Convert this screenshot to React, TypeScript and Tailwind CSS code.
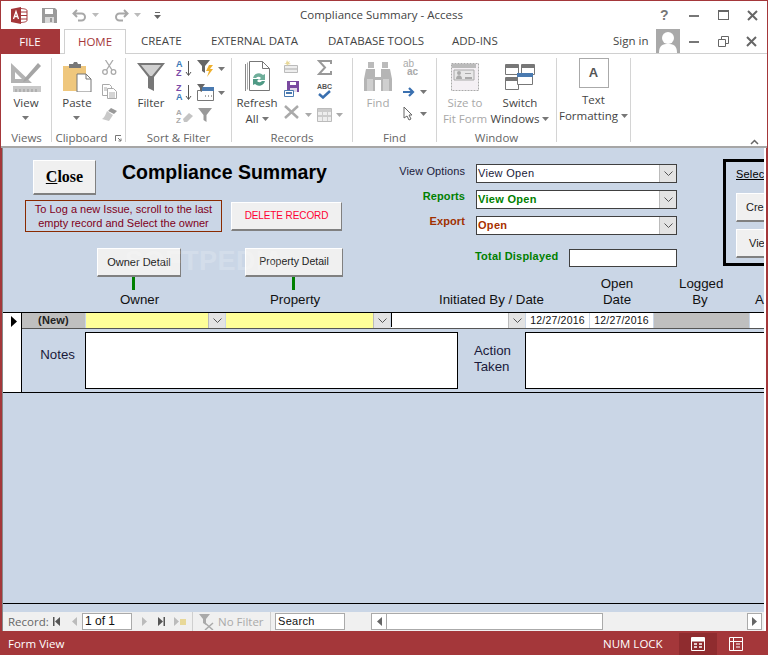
const ui = "font-['Open_Sans','Noto_Sans',sans-serif]";
const form = "font-['Liberation_Sans',Arial,sans-serif]";

const Caret = ({ color = "#777" }: { color?: string }) => (
  <svg width="7" height="4" viewBox="0 0 7 4" className="shrink-0"><path d="M0 0h7L3.5 4z" fill={color} /></svg>
);

const AccessLogo = () => (
  <svg width="17" height="17" viewBox="0 0 17 17">
    <path d="M9 1.5c3 0 7 .6 7 2v10c0 1.400-4 2-7 2z" fill="#fff" stroke="#a4373a" />
    <path d="M10 5h6M10 8.500h6M10 12h6" stroke="#a4373a" />
    <path d="M0 2l10-2v17L0 15z" fill="#a4373a" />
    <path d="M2.500 12L5 4.500 7.500 12M3.500 9.500h3" stroke="#fff" strokeWidth="1.300" fill="none" />
  </svg>
);

const SaveIcon = () => (
  <svg width="15" height="15" viewBox="0 0 15 15">
    <path d="M0 0h13l2 2v13H0z" fill="#9b9b9b" />
    <path d="M3 1h8v5H3z" fill="#fff" />
    <path d="M3 9h9v6H3z" fill="#d8d8d8" />
    <path d="M8 10h2v4H8z" fill="#9b9b9b" />
  </svg>
);

const Undo = ({ flip = false }: { flip?: boolean }) => (
  <svg width="15" height="13" viewBox="0 0 15 13" className={flip ? "-scale-x-100" : ""}>
    <path d="M5 1L1.500 4.500 5 8M2 4.500h7.500a3.500 3.500 0 0 1 0 7H6" fill="none" stroke="#a8a8a8" strokeWidth="2" />
  </svg>
);

const QatCaret = () => (
  <svg width="7" height="7" viewBox="0 0 7 7"><path d="M1 0h5v1H1zM0 3h7L3.500 7z" fill="#666" /></svg>
);

const WinMin = () => <span className="block w-[10px] h-[2px] bg-[#777] mt-[6px]" />;

const WinClose = () => (
  <svg width="11" height="11" viewBox="0 0 11 11"><path d="M1 1l9 9M10 1l-9 9" stroke="#666" strokeWidth="2" /></svg>
);

const ViewIcon = () => (
  <svg width="32" height="32" viewBox="0 0 32 32">
    <path d="M1 2v20h21z M5 11v7h7z" fill="#b3b3b3" fillRule="evenodd" />
    <path d="M15 17L28 2l3 3-13 14-5 2z" fill="#a5a5a5" />
    <path d="M3 25h28v6H3z" fill="#c8c8c8" />
    <path d="M6 28v3M10 28v3M14 28v3M18 28v3M22 28v3M26 28v3" stroke="#999" />
  </svg>
);

const PasteIcon = () => (
  <svg width="30" height="30" viewBox="0 0 30 30">
    <path d="M1 4h23v25H1z" fill="#efc77d" />
    <path d="M7 2h4l1-2h3l1 2h3v4H7z" fill="#777" />
    <path d="M15 12h9l5 5v13H15z" fill="#fff" stroke="#777" />
    <path d="M24 12v5h5" fill="none" stroke="#777" />
  </svg>
);

const CutIcon = () => (
  <svg width="15" height="15" viewBox="0 0 15 15" fill="none" stroke="#aaa" strokeWidth="1.300">
    <circle cx="3" cy="12" r="2.300" /><circle cx="11.500" cy="12" r="2.300" />
    <path d="M4.500 10L11 0M10 10L3.500 0" />
  </svg>
);

const CopyIcon = () => (
  <svg width="15" height="15" viewBox="0 0 15 15" fill="#fff" stroke="#aaa">
    <path d="M.5.500h7l2 2v9h-9z" /><path d="M5.500 4.500h6l3 3v7h-9z" />
    <path d="M7 9h6M7 11h6M7 13h6M2 4h3M2 6h3" />
  </svg>
);

const BrushIcon = () => (
  <svg width="15" height="13" viewBox="0 0 15 13">
    <path d="M9 0l6 3-3 3-6-3z" fill="#999" />
    <path d="M5 3l6 4-4 6-7-2c2-1 3-3 5-8z" fill="#c9c9c9" />
  </svg>
);

const FunnelLarge = () => (
  <svg width="28" height="28" viewBox="0 0 28 28">
    <path d="M0 0h28L17 14v14l-6-3V14z" fill="#777" />
    <path d="M4 2h20l-9 11h-2z" fill="#d0d0d0" />
  </svg>
);

const SortIcon = ({ down = true }: { down?: boolean }) => (
  <div className="relative w-[17px] h-[17px] flex">
    <div className={`flex flex-col text-[9px] leading-[8.500px] font-bold ${form}`}>
      <span className={down ? "text-[#3a7ab8]" : "text-[#7a4aa8]"}>{down ? "A" : "Z"}</span>
      <span className={down ? "text-[#7a4aa8]" : "text-[#3a7ab8]"}>{down ? "Z" : "A"}</span>
    </div>
    <svg width="7" height="17" viewBox="0 0 7 17" className="ml-[2px]"><path d="M3.500 1v14M1 12l2.500 3.500L6 12" fill="none" stroke="#555" /></svg>
  </div>
);

const FunnelSmall = ({ color = "#777" }: { color?: string }) => (
  <svg width="14" height="14" viewBox="0 0 14 14"><path d="M0 0h14L8.500 7v7l-3-2V7z" fill={color} /></svg>
);

const FilterBolt = () => (
  <svg width="17" height="17" viewBox="0 0 17 17">
    <path d="M0 0h13L8 6v7l-3-2V6z" fill="#666" />
    <path d="M12 5h4l-3 4h3l-6 8 2-6H9z" fill="#efb02e" />
  </svg>
);

const FilterForm = () => (
  <svg width="17" height="17" viewBox="0 0 17 17">
    <path d="M.5 6.500h16v10H.5z" fill="#fff" stroke="#777" />
    <path d="M5 3h12v4H5z" fill="#4a7ab0" />
    <path d="M8 12h1M11 12h1M14 12h1" stroke="#555" />
    <path d="M0 0h8L5 4v4L3 7V4z" fill="#666" />
  </svg>
);

const ClearSort = () => (
  <svg width="17" height="16" viewBox="0 0 17 16">
    <text x="0" y="7" fontSize="8" fill="#aaa" fontFamily="Liberation Sans" fontWeight="bold">A</text>
    <text x="0" y="15" fontSize="8" fill="#aaa" fontFamily="Liberation Sans" fontWeight="bold">Z</text>
    <path d="M7 11l6-6 4 3-6 6H8z" fill="#c4c4c4" />
  </svg>
);

const RefreshIcon = () => (
  <svg width="25" height="31" viewBox="0 0 25 31">
    <path d="M.5 3v27" stroke="#888" fill="none" />
    <path d="M2.500 1.500v27" stroke="#aaa" fill="none" />
    <path d="M4.500.5h13l7 7v22h-20z" fill="#fff" stroke="#777" />
    <path d="M17.500.5v7h7" fill="none" stroke="#777" />
    <path d="M8 17a6 6 0 0 1 10-3l2-1v6h-6l2-2a3.500 3.500 0 0 0-5 0z" fill="#6fae9a" />
    <path d="M20 20a6 6 0 0 1-10 3l-2 1v-6h6l-2 2a3.500 3.500 0 0 0 5 0z" fill="#4f9a85" />
  </svg>
);

const NewRecIcon = () => (
  <svg width="14" height="13" viewBox="0 0 14 13">
    <path d="M.5 5.500h13v7H.5z" fill="#eee" stroke="#bbb" />
    <path d="M1 8h12v2H1z" fill="#ccc" />
    <path d="M3 0l1 2 2-1-1 2 2 1-3 .5L3 6 2.500 4 0 3.500 2 3z" fill="#e8d898" />
  </svg>
);

const SaveRecIcon = () => (
  <svg width="15" height="16" viewBox="0 0 15 16">
    <path d="M3 0h12v11H3z" fill="#7a4aa0" />
    <path d="M6 1h6v3H6z" fill="#fff" />
    <path d="M6 7h7v4H6z" fill="#e0d8e8" />
    <path d="M.5 9.500h9v6h-9z" fill="#fff" stroke="#4a7ab0" />
    <path d="M2 12h6" stroke="#4a7ab0" strokeWidth="2" />
  </svg>
);

const DeleteX = () => (
  <svg width="15" height="14" viewBox="0 0 15 14"><path d="M1 1l13 12M14 1L1 13" stroke="#aaa" strokeWidth="2.500" /></svg>
);

const SigmaIcon = () => (
  <svg width="15" height="15" viewBox="0 0 15 15"><path d="M14 4V1H2l6 6.500L2 14h12v-3" fill="none" stroke="#999" strokeWidth="2" /></svg>
);

const SpellIcon = () => (
  <div className="flex flex-col items-center w-[15px]">
    <span className={`text-[7px] leading-[7px] font-bold text-[#555] ${form}`}>ABC</span>
    <svg width="13" height="9" viewBox="0 0 13 9"><path d="M1 4l4 3.500L12 1" fill="none" stroke="#3a70b0" strokeWidth="2.500" /></svg>
  </div>
);

const MoreIcon = () => (
  <svg width="15" height="14" viewBox="0 0 15 14">
    <path d="M.5.500h14v13H.5z" fill="#eee" stroke="#bbb" />
    <path d="M1 1h13v3H1zM1 7h13v2H1z" fill="#ccc" />
    <path d="M5.500 1v12M10.500 1v12" stroke="#ccc" />
  </svg>
);

const Binoculars = () => (
  <svg width="28" height="29" viewBox="0 0 28 29">
    <path d="M4 0h6v6H4zM18 0h6v6h-6z" fill="#bbb" />
    <path d="M2 7h9v8h6V7h9l2 10v12H17V18h-6v11H0V17z" fill="#b5b5b5" />
    <path d="M3 17h6v12H3zM19 17h6v12h-6z" fill="#cfcfcf" />
  </svg>
);

const ReplaceIcon = () => (
  <div className={`flex flex-col w-[16px] text-[10px] leading-[8px] text-[#aaa] ${form}`}>
    <span>ab</span><span className="pl-[4px] font-bold">ac</span>
  </div>
);

const GotoIcon = () => (
  <svg width="12" height="10" viewBox="0 0 12 10"><path d="M0 5h10M6 1l4 4-4 4" fill="none" stroke="#3a70b0" strokeWidth="2.200" /></svg>
);

const SelectIcon = () => (
  <svg width="10" height="15" viewBox="0 0 10 15"><path d="M1 1v11l3-2 2 4 2-1-2-4h3z" fill="#fff" stroke="#666" /></svg>
);

const SizeFitIcon = () => (
  <svg width="28" height="28" viewBox="0 0 28 28">
    <path d="M.5.500h27v27H.5z" fill="#f4f0f4" stroke="#aaa" strokeDasharray="2 1" />
    <path d="M1 1h24v4H1z" fill="#bbb" />
    <path d="M3 7h20v10H3z" fill="#e8e8e8" stroke="#aaa" />
    <circle cx="8" cy="10" r="2" fill="#aaa" /><path d="M5 16c0-5 6-5 6 0z" fill="#aaa" />
    <path d="M14 14h7v2h-7zM14 10h6v1h-6z" fill="#aaa" />
  </svg>
);

const SwitchIcon = () => (
  <svg width="30" height="26" viewBox="0 0 30 26" fill="#fff" stroke="#777">
    <path d="M.5.500h13v10h-13z" /><path d="M16.500.500h13v10h-13z" />
    <path d="M.5 13.500h13v12h-13z" />
    <path d="M1 1h12v3H1zM17 1h12v3H17zM1 14h12v3H1z" fill="#777" stroke="none" />
    <path d="M12.500 9.500h15v11h-15z" />
    <path d="M12 9h16v4H12z" fill="#4a7ab0" stroke="none" />
  </svg>
);

const GroupLabel = ({ children }: { children: React.ReactNode }) => (
  <div className="absolute -bottom-[4px] left-0 right-0 text-center text-[11.500px] leading-[16px] text-[#666]">{children}</div>
);

const Group = ({ w, label, extra, children }: { w: string; label?: string; extra?: React.ReactNode; children: React.ReactNode }) => (
  <div className={`relative h-[84px] shrink-0 border-r border-[#d4d4d4] ${w}`}>
    <div className="flex h-[68px]">{children}</div>
    {label && <GroupLabel>{label}{extra}</GroupLabel>}
  </div>
);

const Big = ({ w, icon, h = "h-[37px]", lines, caret, disabled }: { w: string; icon: React.ReactNode; h?: string; lines: string[]; caret?: "below" | "inline"; disabled?: boolean }) => (
  <div className={`flex flex-col items-center shrink-0 ${w}`}>
    <div className={`flex items-center justify-center shrink-0 ${h}`}>{icon}</div>
    <div className={`text-[11.500px] leading-[16px] text-center whitespace-nowrap ${disabled ? "text-[#a8a8a8]" : "text-[#444]"}`}>
      {lines.map((l, i) => (
        <div key={l} className="flex items-center justify-center gap-[3px]">
          {l}{caret === "inline" && i === lines.length - 1 && <Caret />}
        </div>
      ))}
      {caret === "below" && <div className="flex justify-center mt-[5px]"><Caret /></div>}
    </div>
  </div>
);

const Ribbon = () => (
  <div className={`flex h-[94px] bg-white pt-[4px] pl-[1px] text-[#444] border-b-[2px] border-[#a6a6a6] ${ui}`}>
    <Group w="w-[50px]" label="Views">
      <Big w="w-[48px]" icon={<ViewIcon />} lines={["View"]} caret="below" />
    </Group>
    <Group w="w-[74px]" label="Clipboard" extra={<svg width="7" height="7" viewBox="0 0 7 7" className="inline ml-[7px]"><path d="M.5 6V.5H6M3 3l3 3M3.500 6H6V3.500" fill="none" stroke="#777" /></svg>}>
      <Big w="w-[50px]" icon={<PasteIcon />} lines={["Paste"]} caret="below" />
      <div className="flex flex-col items-center gap-[9px] pt-[2px]">
        <CutIcon /><CopyIcon /><BrushIcon />
      </div>
    </Group>
    <Group w="w-[106px]" label="Sort & Filter">
      <Big w="w-[50px]" icon={<FunnelLarge />} lines={["Filter"]} />
      <div className="flex flex-col gap-[7px] pt-[2px]">
        <SortIcon /><SortIcon down={false} /><ClearSort />
      </div>
      <div className="flex flex-col gap-[7px] pt-[2px] ml-[4px]">
        <div className="flex items-center gap-[4px]"><FilterBolt /><Caret /></div>
        <div className="flex items-center gap-[4px]"><FilterForm /><Caret /></div>
        <div className="pl-[1px]"><FunnelSmall color="#999" /></div>
      </div>
    </Group>
    <Group w="w-[121px]" label="Records">
      <Big w="w-[50px]" icon={<RefreshIcon />} lines={["Refresh", "All"]} caret="inline" />
      <div className="flex flex-col items-center gap-[8px] pt-[2px] -ml-[1px] w-[20px]">
        <NewRecIcon /><SaveRecIcon /><DeleteX />
      </div>
      <div className="flex flex-col gap-[8px] pt-[2px] ml-[16px]">
        <SigmaIcon /><SpellIcon />
        <div className="flex items-center gap-[4px] mt-[1px]"><MoreIcon /><Caret color="#aaa" /></div>
      </div>
      <div className="absolute left-[73px] top-[55px]"><Caret color="#aaa" /></div>
    </Group>
    <Group w="w-[84px]" label="Find">
      <Big w="w-[50px]" icon={<Binoculars />} lines={["Find"]} disabled />
      <div className="flex flex-col gap-[9px] pt-[2px]">
        <ReplaceIcon />
        <div className="flex items-center gap-[5px] mt-[2px]"><GotoIcon /><Caret /></div>
        <div className="flex items-center gap-[7px]"><SelectIcon /><Caret /></div>
      </div>
    </Group>
    <Group w="w-[120px]" label="Window">
      <Big w="w-[56px]" icon={<SizeFitIcon />} lines={["Size to", "Fit Form"]} disabled />
      <Big w="w-[54px]" icon={<SwitchIcon />} lines={["Switch", "Windows"]} caret="inline" />
    </Group>
    <Group w="w-[74px]">
      <Big w="w-[73px]" h="h-[34px]" icon={<div className="pb-[4px]"><div className={`w-[30px] h-[30px] border border-[#aaa] flex items-center justify-center text-[13px] font-bold text-[#555] ${form}`}>A</div></div>} lines={["Text", "Formatting"]} caret="inline" />
    </Group>
    <div className="flex-1 flex items-end justify-end pr-[8px] pb-[1px]">
      <svg width="9" height="6" viewBox="0 0 9 6"><path d="M1 5l3.500-3.500L8 5" fill="none" stroke="#666" strokeWidth="1.500" /></svg>
    </div>
  </div>
);

const ComboBtn = () => (
  <div className="w-[17px] h-full shrink-0 bg-[#e3e3e3] flex items-center justify-center border-l border-[#bbb]">
    <svg width="9" height="5" viewBox="0 0 9 5"><path d="M.5.500l4 4 4-4" fill="none" stroke="#555" /></svg>
  </div>
);

const Btn = ({ w, h, className = "", children }: { w: string; h: string; className?: string; children: React.ReactNode }) => (
  <div className={`${w} ${h} shrink-0 bg-[#f0f0f0] border-t border-l border-t-white border-l-white border-b-2 border-r border-b-[#808080] border-r-[#808080] flex items-center justify-center ${className}`}>
    {children}
  </div>
);

const Picker = ({ label, labelClass, value, valueClass }: { label: string; labelClass: string; value: string; valueClass: string }) => (
  <div className="flex items-center h-[19px]">
    <div className={`w-[75px] text-right text-[11px] leading-[14px] tracking-[0.1px] whitespace-nowrap ${labelClass}`}>{label}</div>
    <div className="ml-[11px] w-[201px] h-[19px] bg-white border border-[#404040] flex items-center">
      <div className={`flex-1 pl-[1px] text-[11px] tracking-[0.3px] ${valueClass}`}>{value}</div>
      <ComboBtn />
    </div>
  </div>
);

const FormHeader = () => (
  <div className="border-b border-black">
    <div className="relative flex h-[128px]">
      <div className="w-[387px] shrink-0 pl-[22px] pt-[12px]">
        <div className="flex items-start pl-[8px]">
          <Btn w="w-[63px]" h="h-[35px]">
            <span className="font-['Liberation_Serif',serif] text-[16px] font-bold text-black"><span className="underline">C</span>lose</span>
          </Btn>
          <div className="ml-[26px] text-[19.500px] leading-[24px] font-bold text-black whitespace-nowrap">Compliance Summary</div>
        </div>
        <div className="flex items-center mt-[5px]">
          <div className="w-[197px] h-[32px] border border-[#8a2a00] text-[11px] leading-[14px] text-[#800020] text-center flex items-center justify-center whitespace-nowrap">
            To Log a new Issue, scroll to the last<br />empty record and Select the owner
          </div>
          <Btn w="w-[111px]" h="h-[29px]" className="ml-[9px] text-[10px] -tracking-[0.1px] text-[#ff0033]">DELETE RECORD</Btn>
        </div>
        <div className="flex mt-[16px] pl-[72px]">
          <Btn w="w-[84px]" h="h-[29px]" className="text-[11px] text-[#222]">Owner Detail</Btn>
          <Btn w="w-[98px]" h="h-[29px]" className="ml-[64px] text-[10.500px] text-[#222]">Property Detail</Btn>
        </div>
      </div>
      <div className="w-[333px] shrink-0 pt-[16px]">
        <div className="flex flex-col gap-[7px]">
          <Picker label="View Options" labelClass="-mt-[5px] text-[#1a1a3a]" value="View Open" valueClass="text-[#1a1a3a]" />
          <Picker label="Reports" labelClass="-mt-[7px] text-[#008000] font-bold" value="View Open" valueClass="text-[#008000] font-bold" />
          <Picker label="Export" labelClass="-mt-[9px] text-[#a03000] font-bold" value="Open" valueClass="text-[#a83000] font-bold" />
        </div>
        <div className="flex items-center mt-[14px] ml-[85px]">
          <span className="w-[94px] -mt-[3px] text-[11px] font-bold tracking-[0.2px] text-[#008000] whitespace-nowrap">Total Displayed</span>
          <div className="w-[108px] h-[18px] bg-white border border-[#404040]" />
        </div>
      </div>
      <div className="mt-[11px] h-[107px] flex-1 border-[3px] border-r-0 border-black pl-[10px] overflow-hidden">
        <div className="mt-[5px] text-[11px] leading-[14px] underline text-black whitespace-nowrap tracking-[0.2px]">Select</div>
        <Btn w="w-[60px]" h="h-[29px]" className="mt-[12px] justify-start pl-[9px] text-[11px] text-[#222]">Create</Btn>
        <Btn w="w-[60px]" h="h-[29px]" className="mt-[7px] justify-start pl-[12px] text-[11px] text-[#222]">View</Btn>
      </div>
    </div>
    <div className="flex h-[36px] items-end text-[13.300px] leading-[16px] text-[#111]">
      <div className="w-[117px] shrink-0" />
      <div className="w-[150px] shrink-0 flex flex-col">
        <div className="w-[3px] h-[14px] bg-[#008000] ml-[12px] mb-[2px]" />
        <span className="pb-[4px]">Owner</span>
      </div>
      <div className="w-[169px] shrink-0 flex flex-col">
        <div className="w-[3px] h-[14px] bg-[#008000] ml-[22px] mb-[2px]" />
        <span className="pb-[4px]">Property</span>
      </div>
      <span className="w-[161px] shrink-0 pb-[4px] whitespace-nowrap">Initiated By / Date</span>
      <div className="w-[34px] shrink-0 pb-[4px] text-center">Open<br />Date</div>
      <div className="ml-[45px] w-[42px] shrink-0 pb-[4px] text-center">Logged<br />By</div>
      <span className="ml-[34px] pb-[4px]">A</span>
    </div>
  </div>
);

const RecordRow = () => (
  <div className="flex h-[80px] border-b border-black">
    <div className="w-[19px] shrink-0 bg-white border-r border-black pl-[8px] pt-[3px]">
      <svg width="6" height="11" viewBox="0 0 6 11"><path d="M0 0l6 5.500L0 11z" fill="#000" /></svg>
    </div>
    <div className="flex-1 min-w-0 overflow-hidden">
      <div className="flex h-[16px] border-b border-[#555] text-[10.500px] text-[#111] tracking-[0.2px]">
        <div className="w-[63px] shrink-0 bg-[#bfbfbf] flex items-center justify-center text-[11px] font-bold text-[#222]">(New)</div>
        <div className="w-[139px] shrink-0 ml-[1px] bg-[#ffff99] flex justify-end"><ComboBtn /></div>
        <div className="w-[164px] shrink-0 ml-[1px] bg-[#ffff99] flex justify-end"><ComboBtn /></div>
        <div className="w-[134px] shrink-0 ml-[1px] bg-white flex justify-between"><span className="w-[1px] h-[14px] bg-black" /><ComboBtn /></div>
        <div className="w-[63px] shrink-0 ml-[1px] bg-white flex items-center justify-center">12/27/2016</div>
        <div className="w-[63px] shrink-0 ml-[1px] bg-white flex items-center justify-center">12/27/2016</div>
        <div className="w-[95px] shrink-0 ml-[1px] bg-[#bfbfbf]" />
        <div className="flex-1 ml-[1px] bg-white" />
      </div>
      <div className="flex pt-[3px] text-[13.300px] leading-[16px] text-[#1a1a3a]">
        <div className="w-[53px] shrink-0 text-right pt-[15px]">Notes</div>
        <div className="w-[373px] shrink-0 h-[57px] ml-[10px] bg-white border border-black" />
        <div className="w-[67px] shrink-0 pl-[16px] pt-[11px]">Action<br />Taken</div>
        <div className="flex-1 h-[57px] bg-white border border-black border-r-0" />
      </div>
    </div>
  </div>
);

const NavSep = () => <div className="w-[1px] h-full bg-[#cfcfcf] shrink-0" />;

const TriBtn = ({ left, color = "#999" }: { left?: boolean; color?: string }) => (
  <svg width="5" height="9" viewBox="0 0 5 9" className={left ? "-scale-x-100" : ""}><path d="M0 0l5 4.500L0 9z" fill={color} /></svg>
);

const EndBtn = ({ left, color = "#555" }: { left?: boolean; color?: string }) => (
  <svg width="7" height="9" viewBox="0 0 7 9" className={left ? "-scale-x-100" : ""}><path d="M0 0l5 4.500L0 9zM5.500 0h1.500v9H5.500z" fill={color} /></svg>
);

const NavBar = () => (
  <div className={`flex items-center h-[19px] bg-[#f0f0f0] text-[11.500px] ${ui}`}>
    <span className="ml-[5px] w-[45px] text-[#666]">Record:</span>
    <EndBtn left />
    <div className="ml-[12px]"><TriBtn left color="#bbb" /></div>
    <div className={`ml-[5px] w-[50px] h-[17px] bg-white border border-[#aaa] pl-[2px] text-[12px] leading-[15px] text-[#111] ${form}`}>1 of 1</div>
    <div className="ml-[10px]"><TriBtn color="#bbb" /></div>
    <div className="ml-[11px]"><EndBtn /></div>
    <div className="ml-[9px] flex items-center gap-[1px]">
      <TriBtn color="#bbb" />
      <span className="w-[6px] h-[6px] bg-[#e8d898]" />
    </div>
    <div className="ml-[6px] h-full"><NavSep /></div>
    <div className="ml-[6px]">
      <svg width="16" height="16" viewBox="0 0 16 16"><path d="M0 0h11L7 5v6L4 9V5z" fill="#aaa" /><path d="M6 9l8 7M14 9l-8 7" stroke="#aaa" strokeWidth="1.500" /></svg>
    </div>
    <span className="ml-[3px] w-[52px] text-[#aaa] whitespace-nowrap">No Filter</span>
    <NavSep />
    <div className={`ml-[4px] w-[70px] h-[17px] bg-white border border-[#aaa] pl-[2px] text-[11px] leading-[15px] text-[#111] tracking-[0.3px] ${form}`}>Search</div>
    <div className="ml-[26px] w-[16px] h-[17px] bg-white border border-[#aaa] flex items-center justify-center"><TriBtn left color="#666" /></div>
    <div className="w-[216px] h-[17px] bg-white border border-l-0 border-[#aaa]" />
    <div className="flex-1" />
    <div className="mr-[2px] w-[15px] h-[17px] bg-white border border-[#aaa] flex items-center justify-center"><TriBtn color="#666" /></div>
  </div>
);

const App = () => (
  <div className={`w-[768px] h-[655px] bg-[#a4373a] flex flex-col overflow-hidden pt-[1px] ${ui}`}>
    <div className="flex items-center h-[28px] bg-white mx-[1px] text-[#444] relative">
      <div className="ml-[10px]"><AccessLogo /></div>
      <div className="ml-[14px]"><SaveIcon /></div>
      <div className="ml-[15px]"><Undo /></div>
      <div className="ml-[5px]"><Caret color="#bbb" /></div>
      <div className="ml-[15px]"><Undo flip /></div>
      <div className="ml-[5px]"><Caret color="#bbb" /></div>
      <div className="ml-[13px]"><QatCaret /></div>
      <div className="flex-1 pl-[139px] text-[11.500px] whitespace-nowrap text-[#444]">Compliance Summary - Access</div>
      <div className={`w-[8px] text-[14px] font-bold text-[#777] ${form}`}>?</div>
      <div className="w-[10px] h-[13px] ml-[21px]"><WinMin /></div>
      <div className="w-[11px] h-[10px] ml-[19px] border border-[#666] border-t-2" />
      <div className="ml-[18px] mr-[9px]"><WinClose /></div>
    </div>
    <div className="flex items-end h-[25px] bg-white mx-[1px] border-b border-[#d0d0d0] text-[11.500px]">
      <div className="-ml-[1px] w-[60px] h-[25px] -mb-[1px] bg-[#a4373a] text-white flex items-center justify-center">FILE</div>
      <div className="ml-[4px] w-[62px] h-[25px] -mb-[1px] bg-white border border-b-0 border-[#d0d0d0] text-[#a4373a] flex items-center justify-center">HOME</div>
      <div className="flex h-[24px] items-center text-[#444] whitespace-nowrap">
        <span className="ml-[15px] w-[41px]">CREATE</span>
        <span className="ml-[29px] w-[88px]">EXTERNAL DATA</span>
        <span className="ml-[29px] w-[95px]">DATABASE TOOLS</span>
        <span className="ml-[29px] w-[47px]">ADD-INS</span>
        <span className="ml-[114px] w-[36px]">Sign in</span>
        <div className="ml-[7px] w-[24px] h-[24px] bg-[#a9a9a9] overflow-hidden flex justify-center">
          <svg width="24" height="24" viewBox="0 0 24 24"><circle cx="12" cy="9" r="6" fill="#fff" /><path d="M3 24c0-8 4-9 9-9s9 1 9 9z" fill="#fff" /></svg>
        </div>
        <div className="ml-[9px] w-[10px] h-[13px]"><WinMin /></div>
        <svg width="11" height="11" viewBox="0 0 11 11" className="ml-[19px]"><path d="M.5 3.500h7v7h-7zM3.500 3V.5h7v7H8" fill="none" stroke="#666" /></svg>
        <div className="ml-[17px]"><WinClose /></div>
      </div>
    </div>
    <div className="mx-[1px] shrink-0"><Ribbon /></div>
    <div className="flex-1 flex flex-col mx-[2px] bg-[#cad6e6] border-l border-[#888] border-r-2 border-r-white min-h-0">
      <div className={`relative flex-1 flex flex-col min-h-0 ${form}`}>
        <FormHeader />
        <RecordRow />
        <div className="flex-1 border-b border-black" />
        <div className="h-[8px] shrink-0" />
        <div className="absolute left-[122px] top-[97px] text-[27px] leading-[32px] font-bold text-white/20 tracking-[0.5px] pointer-events-none">SOFTPEDIA</div>
      </div>
      <NavBar />
    </div>
    <div className="flex items-center h-[23px] mt-[1px] text-[11.500px] text-white shrink-0">
      <span className="ml-[8px] w-[595px]">Form View</span>
      <span className="w-[76px]">NUM LOCK</span>
      <div className="w-[38px] h-[22px] bg-[#8f2c2f] flex items-center justify-center">
        <svg width="14" height="14" viewBox="0 0 14 14" fill="none" stroke="#fff"><path d="M.5.500h13v13H.5z" /><path d="M1 1h12v3H1z" fill="#fff" /><path d="M3 7h3M3 10h3M8 7h3M8 10h3" strokeWidth="1.500" /></svg>
      </div>
      <div className="w-[38px] h-[22px] flex items-center justify-center">
        <svg width="14" height="14" viewBox="0 0 14 14" fill="none" stroke="#fff"><path d="M.5.500h13v13H.5zM.5 4.500h13M4.500 1v12" /><path d="M7 7h4M7 10h4" /></svg>
      </div>
    </div>
  </div>
);

export default App;
